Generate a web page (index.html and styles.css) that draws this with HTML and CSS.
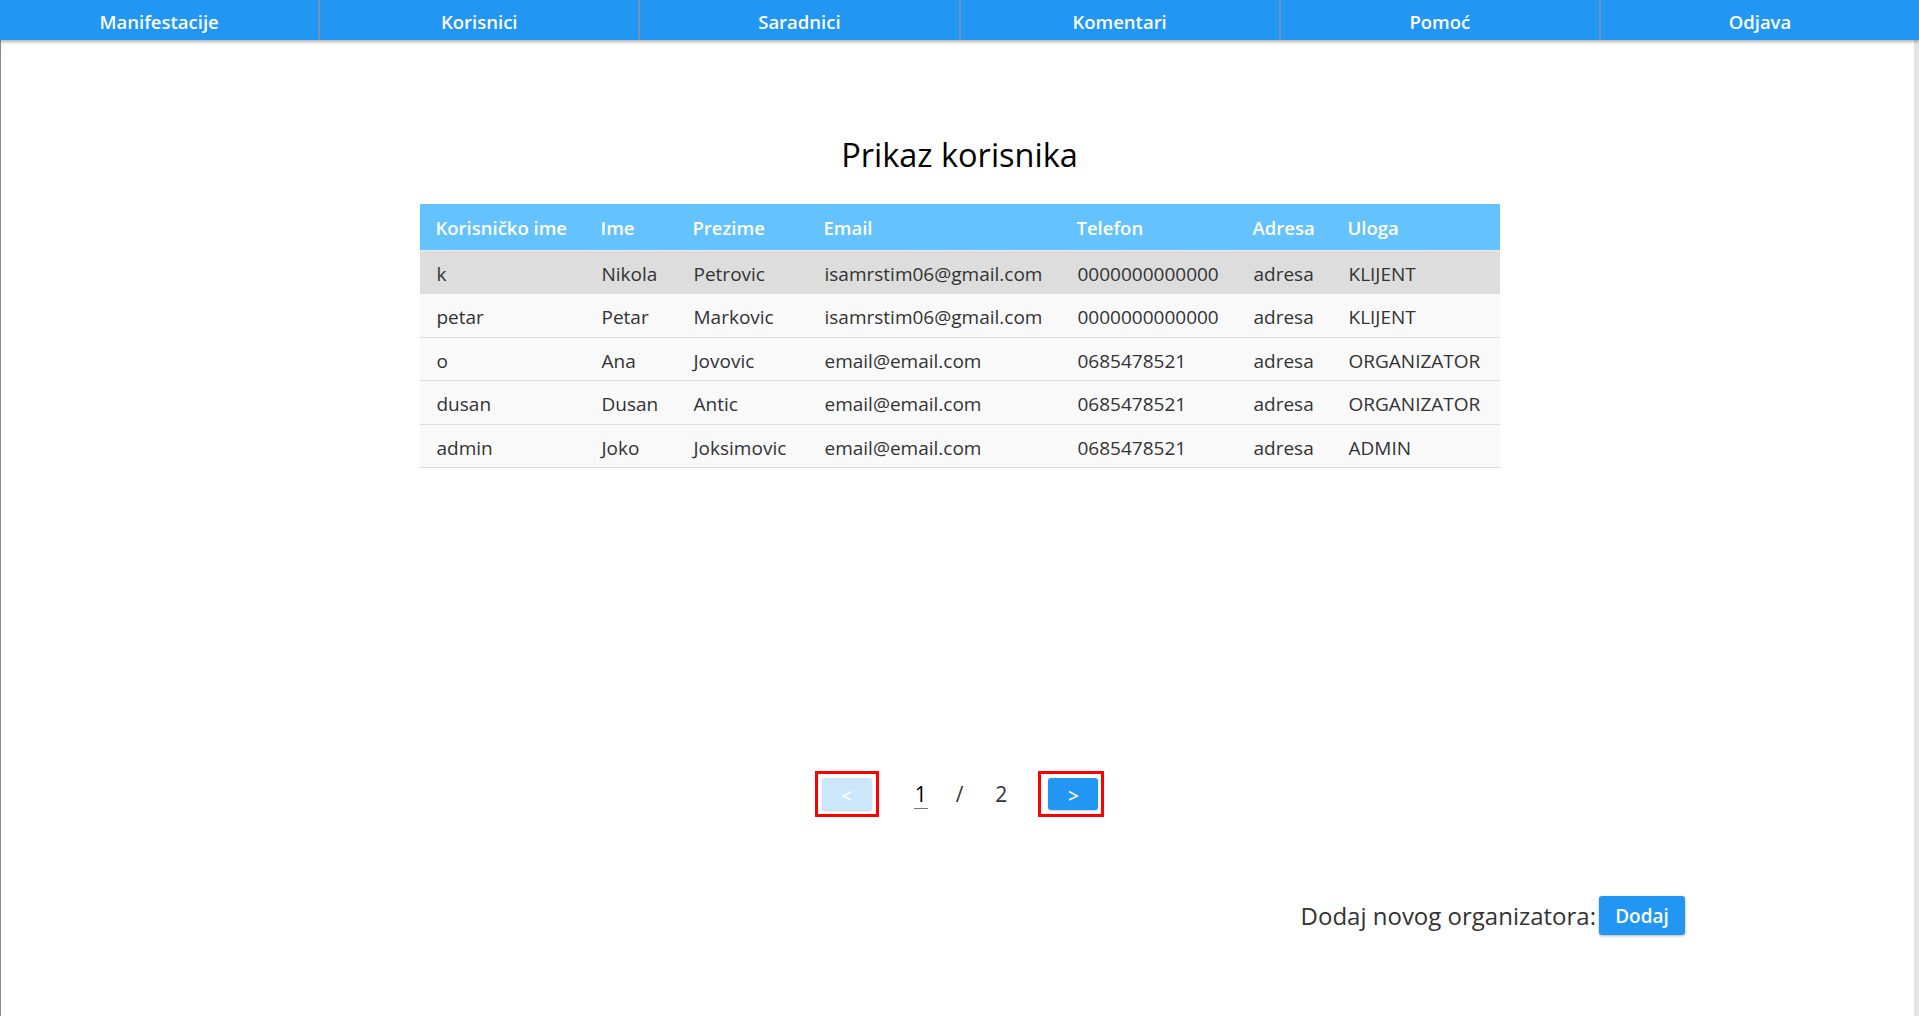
FILE: index.html
```html
<!DOCTYPE html>
<html lang="sr">
<head>
<meta charset="utf-8">
<title>Prikaz korisnika</title>
<link rel="stylesheet" href="styles.css">
</head>
<body>
<nav class="navbar">
  <a class="nav-item">Manifestacije</a>
  <a class="nav-item">Korisnici</a>
  <a class="nav-item">Saradnici</a>
  <a class="nav-item">Komentari</a>
  <a class="nav-item">Pomoć</a>
  <a class="nav-item nav-last">Odjava</a>
</nav>
<main class="page">
  <h1 class="title">Prikaz korisnika</h1>
  <table class="users">
    <colgroup>
      <col class="c1"><col class="c2"><col class="c3"><col class="c4"><col class="c5"><col class="c6"><col class="c7">
    </colgroup>
    <thead>
      <tr><th>Korisničko ime</th><th>Ime</th><th>Prezime</th><th>Email</th><th>Telefon</th><th>Adresa</th><th>Uloga</th></tr>
    </thead>
    <tbody>
      <tr class="hover"><td>k</td><td>Nikola</td><td>Petrovic</td><td>isamrstim06@gmail.com</td><td>0000000000000</td><td>adresa</td><td>KLIJENT</td></tr>
      <tr><td>petar</td><td>Petar</td><td>Markovic</td><td>isamrstim06@gmail.com</td><td>0000000000000</td><td>adresa</td><td>KLIJENT</td></tr>
      <tr><td>o</td><td>Ana</td><td>Jovovic</td><td>email@email.com</td><td>0685478521</td><td>adresa</td><td>ORGANIZATOR</td></tr>
      <tr><td>dusan</td><td>Dusan</td><td>Antic</td><td>email@email.com</td><td>0685478521</td><td>adresa</td><td>ORGANIZATOR</td></tr>
      <tr><td>admin</td><td>Joko</td><td>Joksimovic</td><td>email@email.com</td><td>0685478521</td><td>adresa</td><td>ADMIN</td></tr>
    </tbody>
  </table>
  <div class="pager">
    <span class="pg-frame"><button class="pg-btn pg-disabled">&lt;</button></span>
    <span class="pg-current">1</span>
    <span class="pg-sep">/</span>
    <span class="pg-total">2</span>
    <span class="pg-frame pg-frame-next"><button class="pg-btn pg-next">&gt;</button></span>
  </div>
  <div class="add-row">
    <span class="add-label">Dodaj novog organizatora:</span>
    <button class="add-btn">Dodaj</button>
  </div>
</main>
</body>
</html>
```

FILE: styles.css
```css
html, body {
  margin: 0;
  padding: 0;
  height: 100%;
  background: #ffffff;
  font-family: "Open Sans", "Noto Sans", sans-serif;
}

body {
  display: flex;
  flex-direction: column;
}

.navbar {
  display: flex;
  height: 40px;
  background: #2196f3;
  box-shadow: 0 2px 3px rgba(0, 0, 0, 0.3);
  position: relative;
  z-index: 1;
}

.nav-item {
  flex: 1 1 0;
  display: flex;
  align-items: center;
  justify-content: center;
  padding-top: 2px;
  color: #ffffff;
  font-weight: 600;
  font-size: 18.5px;
  border-right: 2px solid #6f93b8;
}

.nav-last {
  border-right: none;
}

.page {
  flex: 1;
  border-left: 1px solid #8a8a8a;
  border-right: 5px solid #e3e3e3;
  padding-left: 4px;
  display: flex;
  flex-direction: column;
  align-items: center;
}

.title {
  margin: 95px 0 29px;
  font-size: 32.5px;
  line-height: 40px;
  font-weight: 400;
  color: #000000;
}

.users {
  width: 1080px;
  border-collapse: collapse;
  table-layout: fixed;
  font-size: 19px;
  color: #333333;
}

.c1 { width: 165px; }
.c2 { width: 92px; }
.c3 { width: 131px; }
.c4 { width: 253px; }
.c5 { width: 176px; }
.c6 { width: 95px; }
.c7 { width: 168px; }

.users th {
  background: #64c3fe;
  color: #ffffff;
  font-weight: 600;
  font-size: 18.5px;
  text-align: left;
  height: 46px;
  padding: 1px 16px 0;
  box-sizing: border-box;
  border-bottom: 1px solid #e9e9e9;
  white-space: nowrap;
}

.users td {
  background: #f9f9f9;
  padding: 10px 16px 6px 17px;
  line-height: 26.6px;
  border-bottom: 1px solid #dddddd;
  white-space: nowrap;
}

.users tr.hover td {
  background: #dddddd;
}

.pager {
  display: flex;
  align-items: center;
  margin-top: 303px;
  font-size: 21px;
  color: #333333;
}

.pg-frame {
  display: flex;
  border: 3px solid #ff0000;
  padding: 4px;
}

.pg-frame-next {
  padding: 4px 3px 4px 7px;
  margin-left: 31px;
}

.pg-btn {
  width: 50px;
  height: 32px;
  border: none;
  border-radius: 3px;
  color: #ffffff;
  font-family: inherit;
  font-size: 19px;
  font-weight: 600;
  padding-top: 4px;
  box-shadow: 0 1px 2px rgba(0, 0, 0, 0.2);
}

.pg-disabled {
  background: #cce6fc;
}

.pg-next {
  background: #2196f3;
}

.pg-current {
  margin-left: 35px;
  color: #000000;
  border-bottom: 1px solid #777777;
  line-height: 28px;
  padding: 0 1px;
}

.pg-sep {
  margin-left: 28px;
}

.pg-total {
  margin-left: 32px;
}

.add-row {
  align-self: stretch;
  display: flex;
  align-items: center;
  justify-content: flex-end;
  margin-top: 79px;
  padding-right: 229px;
}

.add-label {
  font-size: 24px;
  color: #333333;
  margin-right: 3px;
}

.add-btn {
  width: 86px;
  height: 39px;
  border: none;
  border-radius: 3px;
  background: #2196f3;
  color: #ffffff;
  font-family: inherit;
  font-weight: 600;
  font-size: 19px;
  box-shadow: 0 1px 3px rgba(0, 0, 0, 0.3);
}
```
